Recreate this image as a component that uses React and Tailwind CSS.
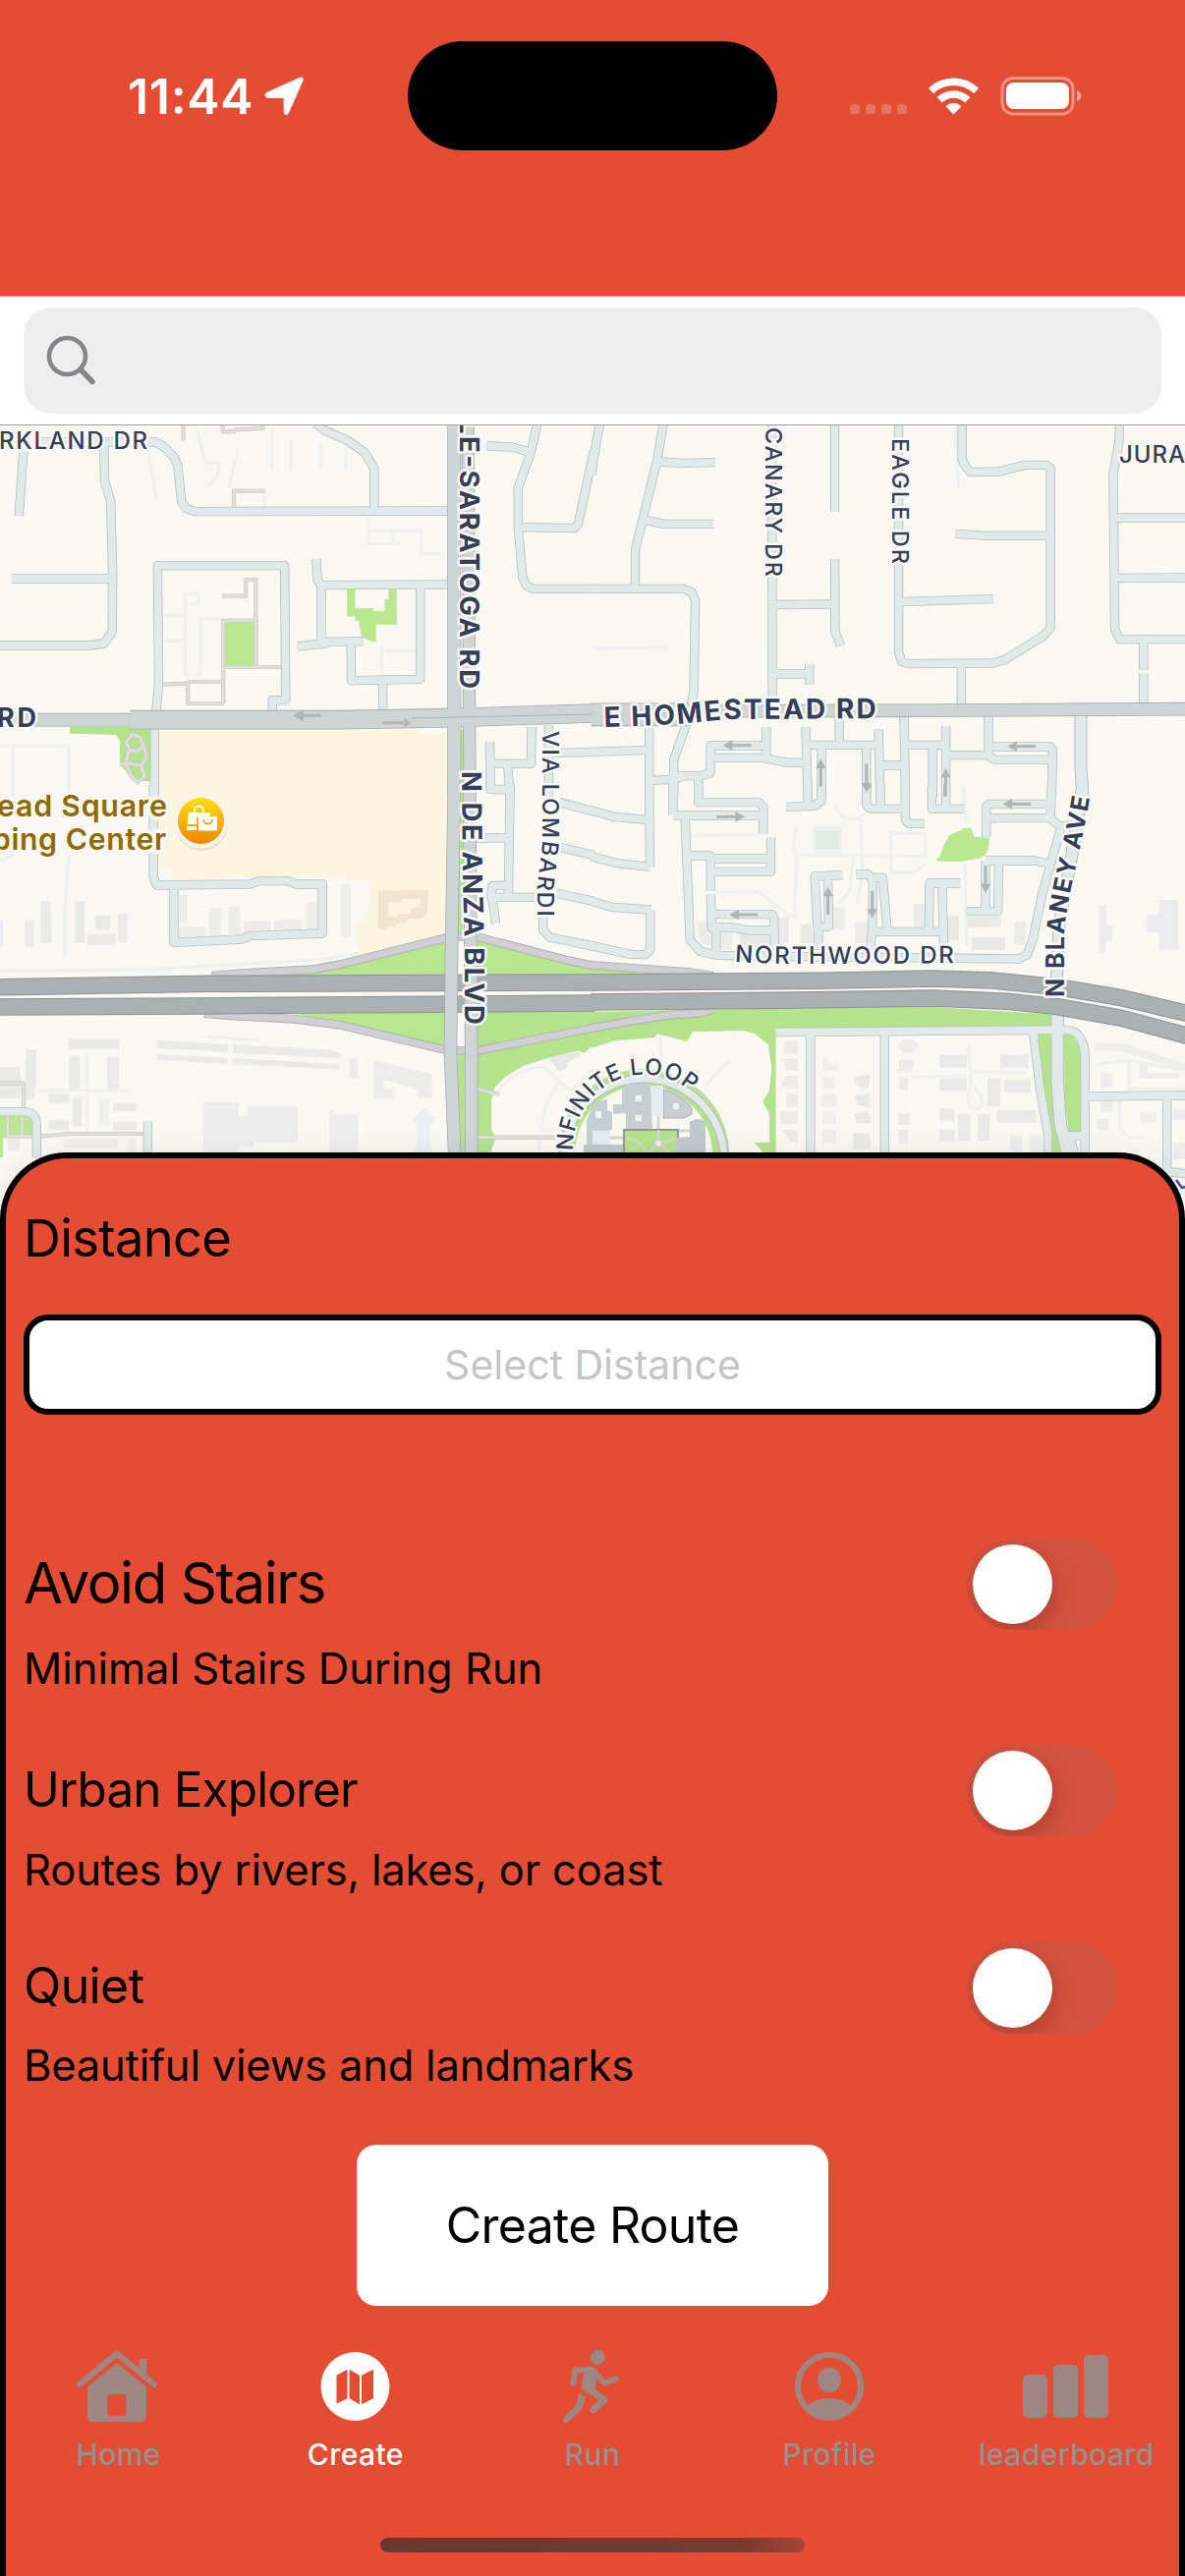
import React from "react";

/* The map is split into four tiles; each tile has its own drawing grid. */
const TILES = [
  {
    at: "translate(0 430) scale(0.384615 0.333333)",
    areas: [
      ["#FDF5DF", "418,938 1113,938 1113,952 1185,952 1185,1142 418,1142"],
      ["#BBE790", "593,605 683,601 683,742 593,742"],
      ["#BBE790", "918,508 940,508 940,567 988,567 988,577 1018,577 1018,540 1028,540 1028,508 1050,508 1050,617 995,617 995,671 972,664 955,650 950,608 940,605 940,592 918,593"],
      ["#B5E28D", "185,930 398,930 398,1095 380,1095 350,1090 330,1060 317,1045 317,972 308,954 257,952 185,950"],
      ["#B5E28D", "1216,938 1228,938 1228,1142 1216,1142"],
    ],
    faint: [
      "M0 988H182V1140", "M34 988V1140", "M700 208V258", "M520 20L545 125L580 122L575 165L548 198", "M630 80L605 200",
      "M975 290V370H1060M975 330H1115V400H1165", "M1040 330V370", "M490 520V770H530V600H590", "M490 522H525V555H490", "M430 588H490M430 668H490",
      "M720 20V145M770 50V145M850 60V145M915 60V145", "M390 80L415 240", "M1010 680V770M1010 695H1100",
    ],
    foot: [
      "M588 10L590 28L620 28L622 22L695 18V8", "M485 8V55", "M619 260V209H700", "M588 530L650 530V480H677V745", "M591 860V605H677",
      "M595 747H745", "M430 800L497 797V858H591", "M495 792H591",
      "M350 953L333 975L345 1003H365L380 985L370 960Z", "M340 1003L333 1045L348 1080L364 1098L382 1083L375 1050L340 1040", "M380 985L387 1020L372 1052", "M317 1042H340",
    ],
    minor: [
      "M62 88L50 285", "M275 60L277 180L293 240L298 460L297 640L275 675L240 681H0", "M31 477H295",
      "M110 60H410L435 75L460 105L470 130L480 240L492 262L515 272L1190 270", "M835 3L860 25L920 55L965 92L990 140V268",
      "M413 885L420 800L417 437H753L756 848H721V885", "M837 417L840 480L850 497L1190 495", "M850 497V668",
      "M787 684L860 675L865 670L962 668", "M929 670V788L1112 784V497", "M1013 790V875",
      "M1422 3L1405 90L1371 200V320L1383 475L1392 497L1410 508H1572", "M1288 72L1355 75L1400 90", "M1372 320L1520 323L1530 310L1572 85",
      "M409 930V1142", "M1296 975L1298 1120H1355", "M1343 1045L1350 1142", "M1298 1042H1405L1407 930", "M1452 925V1142", "M1460 1010L1572 1006",
    ],
    major: [
      ["M0 908H345", 12], ["M345 908H900L1190 902L1572 888", 18], ["M1202 3V1142", 12.5], ["M1238 3L1243 1142", 11.5],
    ],
    arrows: ["M850 895H795", "M1013 917H1068"],
    heads: ["775,895 803,877 803,913", "1088,917 1070,902 1070,932"],
  },
  {
    at: "translate(603 430) scale(0.384615 0.333333)",
    areas: [],
    faint: ["M0 690L200 686", "M960 20L970 200"],
    foot: [],
    minor: [
      "M20 3L10 60L-3 160", "M188 3L170 120L113 390V505", "M175 120L240 124L325 122", "M138 298L190 310H320",
      "M-3 508H240L262 518L272 545L268 820L255 900L215 1030V1142", "M475 3L476 840", "M641 3V273", "M641 417L642 640L657 682",
      "M478 557L640 555", "M480 768H575", "M574 738V800", "M810 3V700L818 730L835 737L1060 735L1090 725L1195 650L1212 625V140L1200 130H1145L1075 150L1000 152L985 130L978 110V3",
      "M960 340L1045 346H1210", "M812 548L1060 539", "M976 738V866", "M1395 3L1393 60L1378 155L1382 630L1395 662H1572",
      "M1382 291H1572", "M1382 475L1572 474", "M1458 665V755", "M1458 765V862",
      "M150 935V1142", "M-3 1006L148 1000", "M150 1093L220 1090L232 1080L290 1078L312 1070V987H460", "M460 930V1025",
      "M315 1024H450L510 1038L570 1040", "M280 1080V1142", "M564 930L570 1142", "M568 985H757", "M653 905V985", "M606 985V1142",
      "M725 985V1142", "M757 937L761 1142", "M824 893L828 1142", "M762 1047H828", "M826 985H935", "M900 985V1142", "M935 927V1142",
      "M935 1016H1045L1065 1030H1213", "M1048 892V1020", "M1048 990H1212L1218 1000L1215 1142",
    ],
    major: [["M-3 892H255", 22], ["M250 882L760 880L1572 875", 12]],
    mid: [["M1292 888V1050L1297 1142", 11]],
    arrows: ["M420 986H362", "M1172 989H1115", "M604 1112V1050", "M725 1042V1105", "M933 1142L935 1078"],
    heads: ["345,986 370,970 370,1002", "1098,989 1123,973 1123,1005", "604,1027 591,1056 617,1056", "725,1129 712,1100 738,1100", "935,1055 922,1084 948,1084"],
  },
  {
    at: "translate(0 800) scale(0.384615 0.333333)",
    areas: [
      ["#FDF5DF", "418,28 1185,28 1185,455 955,515 940,420 970,412 980,292 860,280 780,272 455,290 455,255 418,255"],
      ["#F2E5CF", "1001,320 1133,318 1131,390 1115,405 1080,405 1075,415 1050,420 1048,430 1025,430 1022,437 1001,437"],
      ["#FDF5DF", "1027,355 1065,355 1065,345 1112,345 1112,368 1090,375 1085,390 1055,390 1050,398 1027,398"],
      ["#B8E58F", "1185,468 950,540 860,565 740,580 1185,582"],
      ["#B8E58F", "1255,460 1500,530 1572,550 1572,580 1255,580"],
      ["#B5E28D", "1210,28 1228,28 1226,450 1210,450"],
      ["#B8E58F", "780,697 1180,690 1180,802 900,725"],
      ["#B5E28D", "1262,690 1572,688 1572,790 1545,815 1530,808 1450,830 1385,855 1340,885 1310,920 1300,960 1300,1050 1312,1070 1298,1122 1262,1122"],
      ["#B5E28D", "1210,820 1235,820 1240,1122 1215,1122"],
      ["#BBE790", "0,1008 92,1008 90,1065 18,1070 18,1075 8,1075 8,1135 0,1135"],
      ["#EAEAE9", "107,351 134,351 137,480 107,480"], ["#EAEAE9", "65,410 90,408 90,490 65,492"], ["#EAEAE9", "198,351 225,351 225,480 198,480"],
      ["#EAEAE9", "252,396 291,396 291,440 252,440"], ["#EAEAE9", "231,453 307,450 305,485 231,485"], ["#EAEAE9", "312,390 338,387 337,477 312,477"],
      ["#ECECEB", "465,333 496,333 496,418 465,418"], ["#ECECEB", "553,372 584,372 584,455 553,455"], ["#ECECEB", "605,369 635,369 635,452 605,452"],
      ["#ECECEB", "468,430 543,430 543,460 468,462"], ["#ECECEB", "645,412 717,410 717,443 645,448"], ["#ECECEB", "725,410 797,407 797,438 725,443"],
      ["#ECECEB", "811,355 842,355 842,435 811,438"], ["#EEEEEC", "901,300 928,300 928,460 901,460"], ["#ECECEB", "0,410 8,410 8,492 0,492"],
      ["#EAEAE9", "181,773 315,773 315,803 181,803"], ["#EAEAE9", "69,804 96,804 96,910 90,958 65,960 65,910"], ["#EAEAE9", "183,824 211,824 211,928 183,928"],
      ["#EAEAE9", "283,826 315,826 315,926 283,926"], ["#EAEAE9", "0,858 54,858 54,955 0,955"], ["#EAEAE9", "129,940 182,940 182,970 129,970"],
      ["#EAEAE9", "192,950 218,950 216,1040 192,1040"], ["#EEF0EE", "263,952 289,952 289,1040 263,1040"], ["#EAEAE9", "299,968 361,968 361,994 299,994"],
      ["#EAEAE9", "129,1020 182,1020 182,1050 129,1050"], ["#EAEAE9", "299,1026 361,1026 361,1052 299,1052"], ["#EFEFED", "168,1077 312,1077 312,1105 168,1105"],
      ["#EAEAE9", "20,1078 52,1078 52,1115 20,1115"], ["#EFEFED", "340,1077 360,1077 360,1122 340,1122"],
      ["#EAEAE9", "415,776 603,790 603,812 415,801"], ["#EAEAE9", "415,820 601,830 601,848 415,836"], ["#EAEAE9", "616,790 870,805 903,818 900,832 616,815"],
      ["#EAEAE9", "615,831 900,849 900,866 615,849"], ["#EFEFEE", "551,763 684,772 684,780 551,771"], ["#ECECEB", "926,831 948,831 946,893 926,893"],
      ["#ECECED", "988,838 1143,880 1143,953 1106,953 1104,925 1015,897 1013,922 1043,926 1040,955 988,955"],
      ["#EDEDED", "538,966 632,966 632,1008 655,1008 655,979 788,979 788,1088 671,1088 671,1100 632,1100 632,1122 538,1122"],
      ["#EDEDEE", "872,990 886,990 886,1003 948,1003 948,1122 872,1122"], ["#ECF0F0", "1124,980 1152,1015 1138,1035 1138,1100 1148,1122 1090,1122 1102,1100 1102,1035 1092,1018"],
      ["#E6E7E7", "1450,830 1535,808 1535,825 1500,845 1502,860 1480,872 1465,852"],
    ],
    faint: [
      "M182 210L170 400V518", "M0 230L40 205", "M100 930H340", "M230 820V1060", "M1315 935C1350 880 1390 860 1435 858L1510 930L1572 860", "M1480 905C1450 950 1435 1000 1432 1050L1475 1048",
      "M1425 1075L1430 1122", "M0 565L400 560L850 530L950 510",
    ],
    foot: ["M-3 908H62V985", "M20 1010V1070H105L185 1062H385", "M58 1010V1068", "M1262 925L1322 942", "M1262 1073H1475"],
    minor: [
      "M406 -4V280L415 303L660 300L685 290H760L785 300H853V450L660 458L640 468L460 478V303", "M-3 995H65C90 995 97 1015 97 1035V1135", "M391 1023V1122",
      "M1298 -4V10L1348 12M1350 -4L1345 340M1250 160L1345 158M1415 340H1300L1303 305L1345 303", "M1300 320L1312 420",
      "M1480 50L1572 78", "M1480 187L1572 212", "M1470 327L1572 352", "M1437 400V440L1455 462L1572 490",
    ],
    ramps: ["M560 580L640 572L830 560L900 545L1195 460H1260L1500 532L1575 550", "M540 695L620 702L780 712L900 730L1185 808H1265L1575 738"],
    major: [["M1202 -4L1195 500L1192 810L1203 1125", 12], ["M1242 -4L1247 800V1125", 12]],
    highway: ["M-5 614L550 604L1575 600", "M-5 675L520 672L1575 663"],
    arrows: [],
    heads: [],
  },
  {
    at: "translate(603 800) scale(0.384615 0.333333)",
    areas: [
      ["#B8E58F", "-3,552 150,575 -3,580"],
      ["#B5E28D", "-3,690 600,676 900,675 1215,697 1215,742 485,745 485,1122 455,1122 428,1090 468,1088 468,1000 450,965 468,930 474,860 465,790 430,757 400,747 265,750 250,780 170,757 165,768 60,778 -3,800"],
      ["#B5E28D", "1178,755 1215,755 1222,960 1250,1122 1215,1122 1208,1030 1190,900"],
      ["#B5E28D", "1247,755 1270,760 1292,800 1295,1055 1262,1058 1250,980"],
      ["#BBE790", "910,222 918,218 930,180 945,150 975,135 980,128 1002,128 1010,155 1050,158 1048,190 1040,210 1020,222 980,230 910,230"],
      ["#F0F0EC", "582,123 660,123 660,210 582,210"], ["#DCEDE2", "590,137 653,137 653,192 590,192"],
      ["#ECECEA", "275,415 310,415 315,485 285,485"], ["#ECECEA", "335,445 370,445 370,500 335,500"], ["#E9E9E8", "390,450 470,450 470,500 390,500"],
      ["#ECECEA", "490,400 520,400 520,480 490,480"], ["#ECECEA", "635,370 668,370 668,440 635,440"], ["#E9E9E8", "550,425 580,420 590,480 550,480"],
      ["#ECECEA", "695,415 730,415 730,480 695,480"], ["#ECECEA", "850,360 880,360 880,430 850,430"], ["#E9E9E8", "990,400 1082,400 1080,430 990,435"],
      ["#E9E9E8", "940,395 970,395 970,470 940,470"], ["#E9E9E8", "1004,463 1092,463 1092,500 1004,500"], ["#EBEBEA", "1118,415 1147,415 1145,485 1115,480"],
      ["#ECECEE", "1340,363 1360,363 1360,423 1375,425 1375,470 1358,470 1358,507 1340,507"], ["#ECECEE", "1500,348 1550,348 1550,500 1500,500 1500,448 1467,445 1467,393 1500,393"],
      ["#ECEBE9", "510,780 543,775 543,820 503,815"], ["#ECEBE9", "503,835 543,832 543,870 515,870"], ["#ECEBE9", "510,885 543,885 543,925 497,920"],
      ["#ECEBE9", "513,940 543,940 543,980 513,980"], ["#ECEBE9", "498,993 543,993 543,1033 498,1033"], ["#ECEBE9", "500,1050 543,1050 543,1090 525,1090"],
      ["#EEEEEC", "608,830 625,830 625,850 650,850 650,870 608,870"], ["#EEEEEC", "610,890 640,890 640,925 610,925"], ["#EEEEEC", "608,940 645,940 645,980 608,980"],
      ["#EEEEEC", "608,993 645,993 645,1033 608,1033"], ["#EEEEEC", "608,1048 645,1048 645,1090 608,1090"], ["#E9E9E8", "690,890 735,882 730,925 705,920"],
      ["#E9E9E8", "695,945 735,940 735,980 700,975"], ["#E9E9E8", "690,1000 730,993 740,1030 700,1030"], ["#E9E9E8", "690,1060 735,1060 735,1110 690,1110"],
      ["#ECEBE9", "825,773 850,775 863,795 845,815 820,812 806,795"], ["#ECEBE9", "812,835 850,838 845,875 810,872"], ["#ECEBE9", "815,887 835,892 833,930 808,922"],
      ["#ECEBE9", "810,1000 838,1000 838,1035 810,1035"], ["#ECEBE9", "810,1050 835,1050 835,1090 810,1090"],
      ["#EAEAEA", "919,821 991,821 991,860 919,860"], ["#EAEAEA", "1079,821 1153,821 1153,860 1079,860"], ["#EAEAEA", "919,893 991,893 991,932 919,932"],
      ["#EAEAEA", "1045,893 1079,893 1079,978 1045,978"], ["#EAEAEA", "1089,897 1160,897 1160,936 1089,936"], ["#EAEAEA", "919,985 958,985 958,1022 919,1022"],
      ["#EAEAEA", "967,1001 1000,1001 1000,1083 967,1083"], ["#EAEAEA", "1019,1001 1051,1001 1051,1083 1019,1083"], ["#EAEAEA", "1070,990 1174,990 1174,1028 1070,1028"],
      ["#EAEAEA", "919,1048 958,1048 958,1085 919,1085"], ["#ECEEEE", "1105,1067 1137,1067 1137,1122 1105,1122"], ["#ECEEEE", "1155,1067 1188,1067 1188,1122 1155,1122"],
      ["#EEEEEC", "1328,783 1420,790 1520,830 1572,850 1572,870 1500,845 1400,810 1328,810"], ["#ECECEE", "1345,875 1375,880 1375,915 1345,925"],
      ["#ECECEE", "1447,850 1470,850 1470,877 1552,877 1552,893 1447,893"], ["#ECECEE", "1335,1017 1365,1017 1365,1052 1335,1052"], ["#ECECEE", "1345,962 1375,962 1375,995 1345,995"],
      ["#ECECEE", "1535,985 1572,985 1572,1020 1535,1020"], ["#EFEFED", "1450,997 1492,997 1492,1030 1450,1030"], ["#ECECEE", "1535,1090 1572,1090 1572,1140 1535,1140"],
    ],
    faint: [
      "M540 120L530 190L540 210L535 390", "M540 210L850 215H880V145H790V265H850L880 240", "M640 65L665 97L705 100L720 85", "M710 100L715 260L700 360", "M255 152L440 150",
      "M325 325L440 323L520 395L540 400", "M690 215L680 320L655 360", "M980 -4L990 110", "M985 240L990 490", "M995 790L1000 870V920C990 950 990 980 1015 988C1040 980 1035 950 1010 920M1000 872L1150 875",
      "M1330 850L1420 838L1572 870M1420 838V925H1572", "M1395 960V1040L1420 1075H1460", "M180 770V900", "M300 915L360 840", "M845 890L990 885",
    ],
    foot: [],
    minor: [
      "M150 -4L152 248", "M-3 75L60 95L150 104", "M-3 215L60 235L152 247", "M-3 352L50 370L155 378", "M153 380V500L140 515L100 514L-3 488",
      "M213 -4V90", "M213 90H450", "M245 95L258 470L285 505L330 517L470 520L1130 528L1150 515L1165 470L1190 330L1240 125L1262 118", "M280 -4V50H440L452 65V145",
      "M255 213H310L320 222H475", "M472 158V262H313", "M313 213V320", "M313 332L315 430L327 445V512", "M320 392H475L480 400L482 500", "M320 432H370L410 441H480",
      "M570 -4V55", "M513 64L590 60L606 45V-4", "M598 500V430", "M595 430L588 276L661 272", "M623 280L625 430H595", "M698 270H730L742 290L740 440L735 500",
      "M742 280H768L780 440", "M740 445H930", "M890 445L892 297H973", "M925 300L930 490", "M725 -4V58L735 70H828", "M762 -4V70", "M828 -4V105L838 115H878",
      "M898 -4V70H982", "M935 -4V70", "M1215 -4L1212 100L1240 125", "M1042 155V62L1050 55H1212", "M1045 98H1210", "M1040 228H1170L1220 240", "M1040 228V382", "M1075 230L1073 383H990",
      "M485 752L1200 745H1255C1290 745 1303 790 1303 830V1122", "M577 755V1122", "M773 755V1122", "M1166 750L1185 930L1205 1060V1122",
      "M1303 948L1572 945", "M1520 950V1210", "M1525 1178L1572 1185", "M1255 1068H1300", "M1262 1065L1275 1122",
    ],
    ramps: ["M-5 547L250 568L320 580", "M-5 740L100 718L200 700L280 694L320 682"],
    mid: [["M1297 -4L1270 200L1235 420L1228 600", 11], ["M1230 690V900L1238 1030L1258 1125", 11.5]],
    major: [],
    highway: ["M-5 600L600 595L900 588L1050 593L1230 614L1400 647L1575 695", "M-5 660L500 655L900 648L1100 658L1230 674L1400 709L1575 763"],
    arrows: ["M328 94H385", "M1160 55H1103", "M1040 243V305", "M623 393V330", "M740 321V382", "M437 393H380", "M726 -4V5", "M933 30V-4"],
    heads: ["403,94 378,78 378,110", "1085,55 1110,39 1110,71", "1040,328 1027,299 1053,299", "623,308 610,337 636,337", "740,405 727,376 753,376", "362,393 387,377 387,409", "726,18 713,-4 739,-4"],
  },
];

function Strokes({ list, color, width }) {
  return (list || []).map((d, i) => (
    <path key={i} d={d} fill="none" stroke={color} strokeWidth={width} strokeLinejoin="round" vectorEffect="non-scaling-stroke" />
  ));
}

function Layer({ render }) {
  return TILES.map((tile, i) => (
    <g key={i} transform={tile.at}>{render(tile)}</g>
  ));
}

function Wide({ list, color, extra }) {
  return (list || []).map(([d, w], i) => (
    <path key={i} d={d} fill="none" stroke={color} strokeWidth={w + extra} strokeLinejoin="round" vectorEffect="non-scaling-stroke" />
  ));
}

function MapLabel({ id, d, children, size, weight = 450, length, offset = 0, color = "#353D57" }) {
  return (
    <>
      <path id={id} d={d} fill="none" />
      <text fontSize={size} fontWeight={weight} fill={color} stroke="#FAF9F5" strokeWidth="5" strokeLinejoin="round" paintOrder="stroke" textLength={length} lengthAdjust="spacing">
        <textPath href={`#${id}`} startOffset={offset} textLength={length} lengthAdjust="spacing">{children}</textPath>
      </text>
    </>
  );
}

function Campus() {
  return (
    <g>
      <circle cx="655" cy="1175" r="87" fill="#B5E28D" />
      <circle cx="655" cy="1175" r="70" fill="#F8F7F2" />
      <path d="M573 1180A82 82 0 0 1 737 1180" fill="none" stroke="#B4BBBB" strokeWidth="9" />
      <path d="M573 1180A82 82 0 0 1 737 1180" fill="none" stroke="#E2E9E9" strokeWidth="7" />
      <path d="M597 1180V1140L606 1122L618 1119V1130L623 1132V1150L612 1152V1180Z" fill="#C6CED1" />
      <rect x="606" y="1131" width="6" height="7" fill="#EEF5F7" />
      <path d="M633 1109L638 1103H662L664 1150H637V1133L624 1134V1124L633 1124Z" fill="#C6CED1" />
      <rect x="646.500" y="1115" width="6.500" height="6" fill="#EEF5F7" />
      <rect x="646.500" y="1135" width="6.500" height="6" fill="#EEF5F7" />
      <path d="M675 1109C688 1112 699 1120 704 1128V1134L696 1138H675Z" fill="#C6CED1" stroke="#9da4a6" strokeWidth="0.800" />
      <rect x="685" y="1123" width="6" height="6" fill="#EEF5F7" />
      <rect x="663" y="1105" width="12" height="31" fill="#E3EDF0" />
      <path d="M670 1136V1152M620 1158H635M689 1151H706" stroke="#D6D4CE" strokeWidth="3" />
      <rect x="603" y="1151" width="18" height="14" fill="#E3EDF0" />
      <rect x="635" y="1150" width="55" height="30" fill="#B5E28D" />
      <path d="M635 1180V1150H690V1162" fill="none" stroke="#8F9292" strokeWidth="1.800" />
      <path d="M637 1158C650 1160 655 1168 660 1175M670 1150V1163M688 1158C680 1162 675 1164 670 1164L655 1178M670 1164L685 1176" fill="none" stroke="#D6D4CE" strokeWidth="2.500" />
      <circle cx="670" cy="1164" r="3.500" fill="#F0EFEA" stroke="#CFCDC8" strokeWidth="1" />
      <path d="M688 1180V1158L702 1157V1142Q710 1136 718 1142V1180Z" fill="#BFC8CB" />
      <path d="M594 1180V1165H634V1180Z" fill="#C0CACD" />
    </g>
  );
}

function StreetMap() {
  return (
    <svg className="block h-[868px] w-full bg-[#F9F8F3]" viewBox="0 433 1206 868" fontFamily="Inter, sans-serif">
      <Layer render={(t) => t.areas.map(([c, p], i) => <polygon key={i} points={p} fill={c} />)} />
      <Layer render={(t) => <Strokes list={t.faint} color="#EFF1F0" width={3} />} />
      <Layer render={(t) => <Strokes list={t.foot} color="#CBC9C4" width={4.2} />} />
      <Layer render={(t) => <Strokes list={t.foot} color="#E0DEDA" width={2.8} />} />
      <Layer render={(t) => <Strokes list={t.minor} color="#B6BEBF" width={9.4} />} />
      <Layer render={(t) => <Wide list={t.mid} color="#B6BEBF" extra={2} />} />
      <Layer render={(t) => <Strokes list={t.ramps} color="#ADADB2" width={8.8} />} />
      <Layer render={(t) => <Strokes list={t.minor} color="#E2E9E9" width={7.8} />} />
      <Layer render={(t) => <Wide list={t.mid} color="#E2E9E9" extra={0} />} />
      <Layer render={(t) => <Strokes list={t.ramps} color="#CFCFD4" width={7} />} />
      <Layer render={(t) => <Strokes list={t.highway} color="#8D9292" width={17.5} />} />
      <Layer render={(t) => <Strokes list={t.highway} color="#ABB1B1" width={15.5} />} />
      <Layer render={(t) => <Wide list={t.major} color="#A3ABAB" extra={1.6} />} />
      <Layer render={(t) => <Wide list={t.major} color="#CFD5D5" extra={0} />} />
      <path d="M419 731L603 727" stroke="#A9B0B0" strokeWidth="1" />
      <Layer render={(t) => <Strokes list={t.arrows} color="#B3B3B3" width={3} />} />
      <Layer render={(t) => t.heads.map((p, i) => <polygon key={i} points={p} fill="#B3B3B3" />)} />
      <Campus />

      <MapLabel id="rd-parkland" d="M-1 457H300" size={24} length={151}>RKLAND DR</MapLabel>
      <MapLabel id="rd-jura" d="M1139 471H1300" size={24} length={67}>JURA</MapLabel>
      <MapLabel id="rd-canary" d="M779 435V700" size={23.5} length={152}>CANARY DR</MapLabel>
      <MapLabel id="rd-eagle" d="M908 446V700" size={23.5} length={128}>EAGLE DR</MapLabel>
      <MapLabel id="rd-lombardi" d="M552 744V860L547 900V960" size={23} length={189}>VIA LOMBARDI</MapLabel>
      <MapLabel id="rd-northwood" d="M748 979C790 982 850 981 1000 980" size={24} length={223}>NORTHWOOD DR</MapLabel>
      <MapLabel id="rd-loop" d="M588 1193A73 73 0 0 1 702 1110L730 1135" size={23} length={178} offset={15}>INFINITE LOOP</MapLabel>
      <MapLabel id="rd-saratoga" d="M468 426V760" size={27.5} weight={700} length={275}>LE-SARATOGA RD</MapLabel>
      <MapLabel id="rd-anza" d="M470 785L471 900L473 960V1060" size={27.5} weight={700} length={258}>N DE ANZA BLVD</MapLabel>
      <MapLabel id="rd-homestead" d="M615 740L690 737L740 732L900 731" size={28} weight={700} length={277}>E HOMESTEAD RD</MapLabel>
      <MapLabel id="rd-left" d="M-3 740H100" size={27} weight={700} length={40}>RD</MapLabel>
      <MapLabel id="rd-blaney" d="M1083 1015V950C1086 910 1102 860 1110 806" size={25} weight={700} length={206}>N BLANEY AVE</MapLabel>

      <g fontSize="30.500" fontWeight="600" fill="#8F6A00" stroke="#F8F7F3" strokeWidth="8" strokeLinejoin="round" paintOrder="stroke">
        <text x="-3" y="831" textLength="173" lengthAdjust="spacing">ead Square</text>
        <text x="-8" y="865" textLength="177" lengthAdjust="spacing">ping Center</text>
      </g>
      <defs>
        <linearGradient id="poi" x1="0" y1="0" x2="0" y2="1">
          <stop offset="0" stopColor="#FFDF14" />
          <stop offset="1" stopColor="#EE8500" />
        </linearGradient>
      </defs>
      <circle cx="205" cy="839" r="27" fill="#000000" opacity="0.08" />
      <circle cx="204.500" cy="836" r="27.500" fill="#F7F4EC" />
      <circle cx="204.500" cy="835.500" r="23.500" fill="url(#poi)" />
      <g fill="#FFFFFF">
        <path d="M192 827H214V831H202Q200 831 200 833V839H190.500Z" />
        <path d="M190 841H200V845H191Q190 845 190 844Z" />
        <path d="M202 831H221V844Q221 845.500 219.500 845.500H203.500Q202 845.500 202 844Z" />
      </g>
      <path d="M198 828V825A4.500 4.500 0 0 1 207 825V828" fill="none" stroke="#FFFFFF" strokeWidth="2" />
      <path d="M207 834A4.500 4.500 0 0 0 216 834" fill="none" stroke="#F5A000" strokeWidth="1.800" />
      <path d="M1197 1201L1203 1209L1206 1208" fill="none" stroke="#3F53A8" strokeWidth="2.500" />
    </svg>
  );
}

function StatusBar() {
  return (
    <div className="flex h-[111px] items-center text-white">
      <div className="flex w-[415px] items-center gap-[10px] pl-[130px]">
        <span className="text-[50px] leading-[60px] font-semibold tracking-[0.7px]">11:44</span>
        <svg className="h-[40px] w-[41px]" viewBox="0 0 41 40" fill="currentColor">
          <path d="M37 1.200C39.500 0.200 41 1.800 40 4.200L25.500 37C24.300 39.600 21.300 39 21.200 36.300L21 22.500Q21 21.500 20 21.500L5 21.300C1.500 21.200 0.900 17.500 3.800 16.200Z" stroke="currentColor" strokeWidth="0.800" />
        </svg>
      </div>
      <div className="h-[111px] w-[376px] rounded-full bg-black" />
      <svg className="ml-[74px] h-[40px] w-[236px]" viewBox="865 78 236 40">
        <g fill="#FFFFFF" opacity="0.2">
          <rect x="865" y="106" width="10" height="10" rx="3" />
          <rect x="881" y="106" width="10" height="10" rx="3" />
          <rect x="897" y="106" width="10" height="10" rx="3" />
          <rect x="913" y="106" width="10" height="10" rx="3" />
        </g>
        <g fill="none" stroke="#FFFFFF" strokeWidth="7.500">
          <path d="M947.500 92.500A33.500 33.500 0 0 1 993.500 92.500" />
          <path d="M956.200 101.800A20.500 20.500 0 0 1 984.800 101.800" />
        </g>
        <path d="M962.500 108.200Q970.500 101.500 978.500 108.200L970.500 116.500Z" fill="#FFFFFF" />
        <rect x="1020" y="79.500" width="72" height="36.500" rx="11" fill="none" stroke="#FFFFFF" strokeOpacity="0.4" strokeWidth="3" />
        <rect x="1024" y="84" width="64" height="27" rx="7.500" fill="#FFFFFF" />
        <path d="M1096 92Q1100.500 93.500 1100.500 97.500T1096 103Z" fill="#FFFFFF" opacity="0.45" />
      </svg>
    </div>
  );
}

function SearchBar() {
  return (
    <div className="h-[132px] border-y border-[#A0A0A0] bg-white px-[24px] pt-[11px]">
      <div className="flex h-[108px] items-center rounded-[28px] bg-[#EEEEEE] pl-[23px]">
        <svg className="h-[52px] w-[52px]" viewBox="0 0 52 52" fill="none" stroke="#858589" strokeLinecap="round">
          <circle cx="21.500" cy="21.500" r="18.500" strokeWidth="4.600" />
          <path d="M35 35L47 47.500" strokeWidth="5.500" />
        </svg>
      </div>
    </div>
  );
}

function Toggle() {
  return (
    <div className="h-[93px] w-[153px] overflow-hidden rounded-full bg-[#D1533F] p-[6px]">
      <div className="size-[81px] rounded-full bg-white shadow-[2px_8px_20px_rgba(120,30,20,0.35)]" />
    </div>
  );
}

function OptionRow({ title, titleClass, note, noteClass, className }) {
  return (
    <div className={className}>
      <div className="flex h-[93px] items-center justify-between pr-[45px]">
        <span className={titleClass}>{title}</span>
        <Toggle />
      </div>
      <p className={noteClass}>{note}</p>
    </div>
  );
}

const HomeIcon = (
  <svg className="h-[80px] w-[90px]" viewBox="0 0 90 80" fill="currentColor">
    <path d="M5 37L43 5.500L81 37" fill="none" stroke="currentColor" strokeWidth="6" strokeLinecap="round" strokeLinejoin="round" />
    <path d="M65.500 24V13Q65.500 11 67.500 11H71.500Q73.500 11 73.500 13V31Z" />
    <path fillRule="evenodd" d="M41.500 16.500Q43 15.500 44.500 16.500L73 39.500V69Q73 75 67 75H19Q13 75 13 69V39.500ZM35.500 47Q33.500 47 33.500 49V67Q33.500 69 35.500 69H50.500Q52.500 69 52.500 67V49Q52.500 47 50.500 47Z" />
  </svg>
);

const CreateIcon = (
  <svg className="h-[80px] w-[90px]" viewBox="0 0 90 80">
    <circle cx="44.500" cy="39" r="35" fill="currentColor" />
    <g fill="#E44D34" stroke="#E44D34" strokeLinejoin="round">
      <path d="M26 28L36 22.500V51L26 56Z" />
      <path d="M39 22.500L48.500 28V56.500L39 51Z" />
      <path d="M51.500 28L62.500 22.500V51L51.500 56.500Z" />
    </g>
  </svg>
);

const RunIcon = (
  <svg className="h-[80px] w-[84px]" viewBox="2 15 252 240" fill="currentColor" stroke="currentColor" strokeLinecap="round" strokeLinejoin="round">
    <circle cx="144" cy="43" r="22.500" stroke="none" />
    <path d="M69 122L75 83L120 80" fill="none" strokeWidth="18" />
    <path d="M130 84L165 122L200 109" fill="none" strokeWidth="17" />
    <path d="M112 76H127Q137 80 141 90L130 140L142 152L132 157L104 142Q97 134 99 124L107 90Z" strokeWidth="9" />
    <path d="M112 137L164 173L129 205" fill="none" strokeWidth="20" />
    <path d="M88 150Q94 160 107 164L97 196Q96 200 92 204L54 241Q44 246 38 237Q36 231 42 226L76 192Z" stroke="none" />
  </svg>
);

const ProfileIcon = (
  <svg className="h-[80px] w-[90px]" viewBox="0 0 90 80" fill="currentColor">
    <circle cx="45" cy="39" r="32" fill="none" stroke="currentColor" strokeWidth="6" />
    <ellipse cx="45" cy="32.500" rx="12" ry="12.700" />
    <path d="M22.500 60Q30 51 45 51T67.500 60Q58 72 45 72T22.500 60Z" />
  </svg>
);

const LeaderboardIcon = (
  <svg className="h-[80px] w-[90px]" viewBox="0 0 90 80" fill="currentColor">
    <rect x="1" y="27" width="25" height="44" rx="5" />
    <rect x="32" y="17" width="25" height="54" rx="5" />
    <rect x="63" y="7" width="25" height="64" rx="5" />
  </svg>
);

const TABS = [
  { label: "Home", icon: HomeIcon },
  { label: "Create", icon: CreateIcon, active: true },
  { label: "Run", icon: RunIcon },
  { label: "Profile", icon: ProfileIcon },
  { label: "leaderboard", icon: LeaderboardIcon },
];

function TabBar() {
  return (
    <nav className="-mx-[6px] mt-[43px] grid grid-cols-5">
      {TABS.map((tab) => (
        <div key={tab.label} className={tab.active ? "flex flex-col items-center text-white" : "flex flex-col items-center text-[#9E8783]"}>
          {tab.icon}
          <span className={tab.active ? "mt-[10px] text-[30px] leading-[36px] font-medium tracking-[0.4px]" : "mt-[10px] text-[30px] leading-[36px] font-medium tracking-[0.4px] text-[#959190]"}>
            {tab.label}
          </span>
        </div>
      ))}
    </nav>
  );
}

export default function App() {
  return (
    <div className="flex h-[2622px] w-[1206px] flex-col overflow-hidden bg-[#E44D34] font-[Inter,sans-serif] text-black">
      <header className="h-[301px] shrink-0 bg-[#E44D34] pt-[42px]">
        <StatusBar />
      </header>
      <SearchBar />
      <StreetMap />
      <section className="relative -mt-[128px] h-[1449px] shrink-0 rounded-t-[68px] border-x-[6px] border-t-[6px] border-black bg-[#E44D34] shadow-[0_-2px_24px_rgba(0,0,0,0.06)]">
        <div className="px-[18px] pt-[51px]">
          <h2 className="text-[52.5px] leading-[60px] tracking-[-0.7px]">Distance</h2>
          <div className="mt-[48px] flex h-[102px] items-center justify-center rounded-[25px] border-[6px] border-black bg-white text-[41px] leading-[50px] text-[#C5C5C7]">
            Select Distance
          </div>
          <OptionRow
            className="mt-[126px]"
            title="Avoid Stairs"
            titleClass="pb-[3px] text-[58px] leading-[72px] tracking-[-1.4px]"
            note="Minimal Stairs During Run"
            noteClass="mt-[12px] text-[43.5px] leading-[54px] tracking-[-0.03px]"
          />
          <OptionRow
            className="mt-[51px]"
            title="Urban Explorer"
            titleClass="pb-[3px] text-[49.5px] leading-[60px] tracking-[-0.88px]"
            note="Routes by rivers, lakes, or coast"
            noteClass="mt-[7px] text-[43.5px] leading-[54px] tracking-[-0.15px]"
          />
          <OptionRow
            className="mt-[47px]"
            title="Quiet"
            titleClass="pb-[6px] text-[50px] leading-[60px] tracking-[-0.6px]"
            note="Beautiful views and landmarks"
            noteClass="mt-[5px] text-[43.5px] leading-[54px] tracking-[-0.2px]"
          />
          <button className="mx-auto mt-[54px] flex h-[164px] w-[480px] items-center justify-center rounded-[20px] bg-white text-[50px] leading-[60px] tracking-[-0.75px]">
            Create Route
          </button>
        </div>
        <TabBar />
        <div className="mx-auto mt-[67px] h-[15px] w-[432px] rounded-full bg-[linear-gradient(100deg,#6A3830_0%,#773A30_85%,#A84534_100%)]" />
      </section>
    </div>
  );
}
